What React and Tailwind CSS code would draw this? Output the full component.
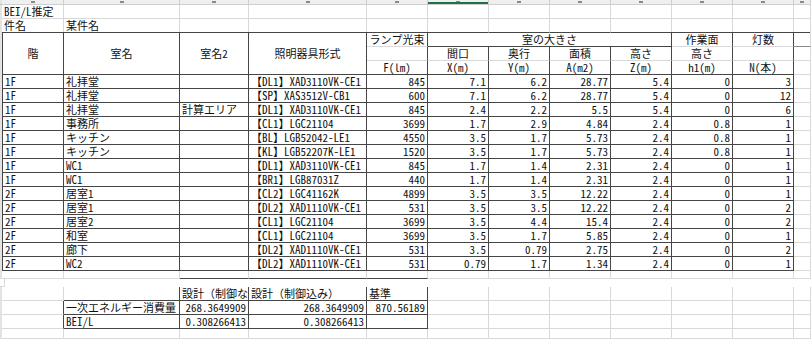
import React from "react";

const GRID =
  "grid grid-cols-[2px_62px_116px_69px_118px_61px_61px_61px_61px_61px_61px_61px_1fr]";
const BASE =
  "whitespace-nowrap px-[2px] text-[11px] leading-[13px] text-[#111]";
const D = "border-r border-b border-[#454545]";
const L = "border-r border-b border-[#d9d9d9]";
const LD = "border-r border-b border-r-[#d9d9d9] border-b-[#454545]";
const DL = "border-r border-b border-r-[#454545] border-b-[#d9d9d9]";

const rows = [
  ["1F", "礼拝堂", "", "【DL1】XAD3110VK-CE1", "845", "7.1", "6.2", "28.77", "5.4", "0", "3"],
  ["1F", "礼拝堂", "", "【SP】XAS3512V-CB1", "600", "7.1", "6.2", "28.77", "5.4", "0", "12"],
  ["1F", "礼拝堂", "計算エリア", "【DL1】XAD3110VK-CE1", "845", "2.4", "2.2", "5.5", "5.4", "0", "6"],
  ["1F", "事務所", "", "【CL1】LGC21104", "3699", "1.7", "2.9", "4.84", "2.4", "0.8", "1"],
  ["1F", "キッチン", "", "【BL】LGB52042-LE1", "4550", "3.5", "1.7", "5.73", "2.4", "0.8", "1"],
  ["1F", "キッチン", "", "【KL】LGB52207K-LE1", "1520", "3.5", "1.7", "5.73", "2.4", "0.8", "1"],
  ["1F", "WC1", "", "【DL1】XAD3110VK-CE1", "845", "1.7", "1.4", "2.31", "2.4", "0", "1"],
  ["1F", "WC1", "", "【BR1】LGB87031Z", "440", "1.7", "1.4", "2.31", "2.4", "0", "1"],
  ["2F", "居室1", "", "【CL2】LGC41162K", "4899", "3.5", "3.5", "12.22", "2.4", "0", "1"],
  ["2F", "居室1", "", "【DL2】XAD1110VK-CE1", "531", "3.5", "3.5", "12.22", "2.4", "0", "2"],
  ["2F", "居室2", "", "【CL1】LGC21104", "3699", "3.5", "4.4", "15.4", "2.4", "0", "2"],
  ["2F", "和室", "", "【CL1】LGC21104", "3699", "3.5", "1.7", "5.85", "2.4", "0", "1"],
  ["2F", "廊下", "", "【DL2】XAD1110VK-CE1", "531", "3.5", "0.79", "2.75", "2.4", "0", "2"],
  ["2F", "WC2", "", "【DL2】XAD1110VK-CE1", "531", "0.79", "1.7", "1.34", "2.4", "0", "1"],
];

function Strip() {
  return <div className="bg-[#e3e3e3]" />;
}

function Cell({ children, cls = "" }) {
  return <div className={`${BASE} ${cls}`}>{children}</div>;
}

function Lights({ n }) {
  return Array.from({ length: n }).map((_, i) => <Cell key={i} cls={L} />);
}

const LETTERS = ["A", "B", "C", "D", "E", "F", "G", "H", "I", "J", "K", "L"];

function TopStrip() {
  return (
    <div className={`${GRID} h-[5px]`}>
      <div className="bg-[#e3e3e3] border-b border-[#c4c4c4]" />
      {LETTERS.map((l) => (
        <div
          key={l}
          className="relative overflow-hidden bg-[#efefef] border-r border-b border-[#cfcfcf]"
        >
          <span className="absolute left-1/2 top-[1px] h-[2px] w-[4px] -translate-x-1/2 bg-[#8a8a8a]" />
          {l === "F" && <span className="absolute left-0 right-0 bottom-0 h-[2px] bg-[#1e7145]" />}
        </div>
      ))}
    </div>
  );
}

function Header() {
  const c = "flex items-center justify-center";
  return (
    <div className={`${GRID} grid-rows-[15px_14px_14px] h-[43px]`}>
      <div className="col-start-1 row-start-1 row-span-3 bg-[#e3e3e3]" />
      <Cell cls={`col-start-2 row-start-1 row-span-3 border-l ${D} ${c}`}>階</Cell>
      <Cell cls={`col-start-3 row-start-1 row-span-3 ${D} ${c}`}>室名</Cell>
      <Cell cls={`col-start-4 row-start-1 row-span-3 ${D} ${c}`}>室名2</Cell>
      <Cell cls={`col-start-5 row-start-1 row-span-3 ${D} ${c}`}>照明器具形式</Cell>

      <Cell cls={`col-start-6 row-start-1 ${DL} ${c}`}>ランプ光束</Cell>
      <Cell cls={`col-start-6 row-start-2 ${DL}`} />
      <Cell cls={`col-start-6 row-start-3 ${D} ${c}`}>F(lm)</Cell>

      <Cell cls={`col-start-7 col-span-4 row-start-1 ${D} ${c}`}>室の大きさ</Cell>
      <Cell cls={`col-start-7 row-start-2 ${DL} ${c}`}>間口</Cell>
      <Cell cls={`col-start-7 row-start-3 ${D} ${c}`}>X(m)</Cell>
      <Cell cls={`col-start-8 row-start-2 ${DL} ${c}`}>奥行</Cell>
      <Cell cls={`col-start-8 row-start-3 ${D} ${c}`}>Y(m)</Cell>
      <Cell cls={`col-start-9 row-start-2 ${DL} ${c}`}>面積</Cell>
      <Cell cls={`col-start-9 row-start-3 ${D} ${c}`}>A(m2)</Cell>
      <Cell cls={`col-start-10 row-start-2 ${DL} ${c}`}>高さ</Cell>
      <Cell cls={`col-start-10 row-start-3 ${D} ${c}`}>Z(m)</Cell>

      <Cell cls={`col-start-11 row-start-1 ${DL} ${c}`}>作業面</Cell>
      <Cell cls={`col-start-11 row-start-2 ${DL} ${c}`}>高さ</Cell>
      <Cell cls={`col-start-11 row-start-3 ${D} ${c}`}>h1(m)</Cell>

      <Cell cls={`col-start-12 row-start-1 ${DL} ${c}`}>灯数</Cell>
      <Cell cls={`col-start-12 row-start-2 ${DL}`} />
      <Cell cls={`col-start-12 row-start-3 ${D} ${c}`}>N(本)</Cell>

      <Cell cls={`col-start-13 row-start-1 border-r border-b border-r-[#d9d9d9] border-b-[#8a8a8a]`} />
      <Cell cls={`col-start-13 row-start-2 ${L}`} />
      <Cell cls={`col-start-13 row-start-3 ${L}`} />
    </div>
  );
}

function DataRow({ r }) {
  return (
    <div className={`${GRID} h-[14px]`}>
      <Strip />
      <Cell cls={`${D} border-l`}>{r[0]}</Cell>
      <Cell cls={D}>{r[1]}</Cell>
      <Cell cls={D}>{r[2]}</Cell>
      <Cell cls={D}>{r[3]}</Cell>
      {r.slice(4).map((v, i) => (
        <Cell key={i} cls={`${D} text-right`}>
          {v}
        </Cell>
      ))}
      <Cell cls={L} />
    </div>
  );
}

export default function App() {
  return (
    <div className="w-[811px] h-[339px] overflow-hidden bg-white font-['Noto_Sans_Mono_CJK_JP','Noto_Sans_CJK_JP',sans-serif] flex flex-col">
      <TopStrip />
      <div className={`${GRID} h-[14px]`}>
        <Strip />
        <Cell cls={L}>BEI/L推定</Cell>
        <Lights n={11} />
      </div>
      <div className={`${GRID} h-[13px]`}>
        <Strip />
        <Cell cls={LD}>件名</Cell>
        <Cell cls={LD}>某件名</Cell>
        <Cell cls={LD} />
        <Cell cls={LD} />
        <Cell cls={LD} />
        <Cell cls={LD} />
        <Cell cls={LD} />
        <Cell cls={LD} />
        <Cell cls={LD} />
        <Cell cls={LD} />
        <Cell cls={LD} />
        <Cell cls={LD} />
      </div>
      <Header />
      {rows.map((r, i) => (
        <DataRow key={i} r={r} />
      ))}
      <div className={`${GRID} h-[16px]`}>
        <Strip />
        <Cell cls={L} />
        <Cell cls={L} />
        <Cell cls={LD} />
        <Cell cls={LD} />
        <Cell cls={LD} />
        <Lights n={8} />
      </div>
      <div className={`${GRID} h-[14px]`}>
        <Strip />
        <Cell cls={L} />
        <Cell cls="border-r border-b border-r-[#454545] border-b-[#454545]" />
        <Cell cls={D}>設計（制御な</Cell>
        <Cell cls={D}>設計（制御込み）</Cell>
        <Cell cls={D}>基準</Cell>
        <Lights n={7} />
      </div>
      <div className={`${GRID} h-[14px]`}>
        <Strip />
        <Cell cls={DL} />
        <Cell cls={D}>一次エネルギー消費量</Cell>
        <Cell cls={`${D} text-right`}>268.3649909</Cell>
        <Cell cls={`${D} text-right`}>268.3649909</Cell>
        <Cell cls={`${D} text-right`}>870.56189</Cell>
        <Lights n={7} />
      </div>
      <div className={`${GRID} h-[14px]`}>
        <Strip />
        <Cell cls={DL} />
        <Cell cls={D}>BEI/L</Cell>
        <Cell cls={`${D} text-right`}>0.308266413</Cell>
        <Cell cls={`${D} text-right`}>0.308266413</Cell>
        <Cell cls={D} />
        <Lights n={7} />
      </div>
      <div className={`${GRID} flex-1`}>
        <Strip />
        <Lights n={12} />
      </div>
    </div>
  );
}
